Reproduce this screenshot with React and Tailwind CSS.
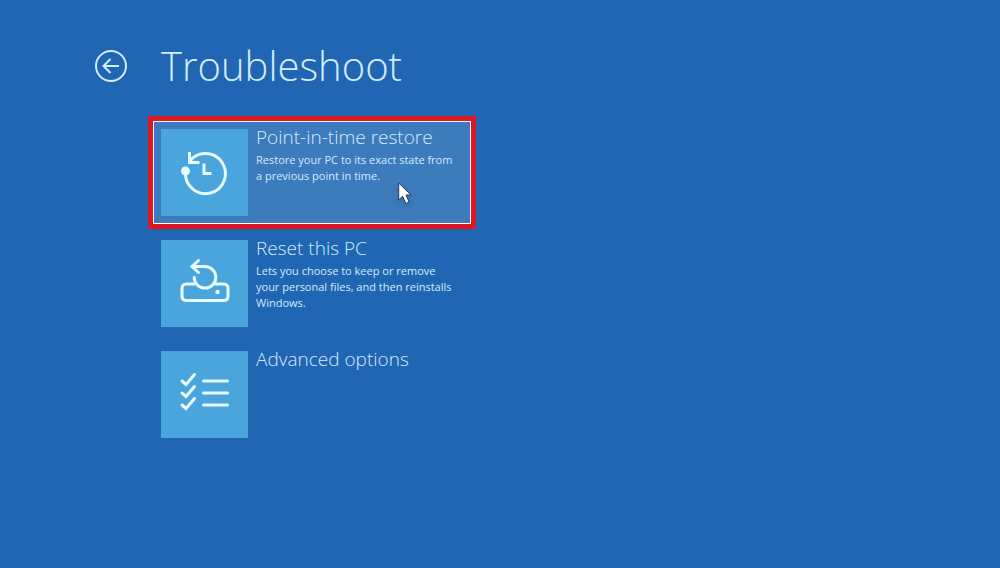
import React, { useState } from 'react';

function RestoreIcon() {
  return (
    <svg viewBox="0 0 87 87" className="h-full w-full" fill="none" stroke="currentColor" strokeWidth="3" aria-hidden="true">
      <path d="M28.500 32.500A20 20 0 1 1 24.500 43" />
      <path d="M28.500 23V33.500H38.500" />
      <path d="M43 34.500V44.500H50.500" />
      <circle cx="24.500" cy="42" r="4.500" fill="currentColor" stroke="none" />
    </svg>
  );
}

function ResetIcon() {
  return (
    <svg viewBox="0 0 87 87" className="h-full w-full" fill="none" stroke="currentColor" strokeWidth="3" strokeLinecap="round" aria-hidden="true">
      <path d="M33.500 44H25.500Q21 44 21 48.500V56Q21 60.500 25.500 60.500H62.500Q67 60.500 67 56V48.500Q67 44 62.500 44H54.500" />
      <path d="M31 26.500H44A10.800 10.800 0 1 1 33.200 37.500" />
      <path d="M37.500 20.500L31 26.500L37.500 32.500" />
      <circle cx="56.500" cy="52" r="2.200" fill="currentColor" stroke="none" />
    </svg>
  );
}

function OptionsIcon() {
  return (
    <svg viewBox="0 0 87 87" className="h-full w-full" fill="none" stroke="currentColor" strokeWidth="3" strokeLinecap="round" aria-hidden="true">
      <path d="M21 30L25 33.500L33.500 23.500M21 42L25 45.500L33.500 35.500M21 54L25 57.500L33.500 47.500" />
      <path d="M42.500 30H66.500M42.500 42H66.500M42.500 54H66.500" />
    </svg>
  );
}

const options = [
  {
    id: 'restore',
    title: 'Point-in-time restore',
    text: 'Restore your PC to its exact state from a previous point in time.',
    Icon: RestoreIcon,
  },
  {
    id: 'reset',
    title: 'Reset this PC',
    text: 'Lets you choose to keep or remove your personal files, and then reinstalls Windows.',
    Icon: ResetIcon,
  },
  { id: 'advanced', title: 'Advanced options', Icon: OptionsIcon },
];

function Pointer() {
  return (
    <svg viewBox="0 0 16 24" className="pointer-events-none absolute top-[60px] left-[244px] h-6 w-4 drop-shadow-md" aria-hidden="true">
      <path d="M0.700 1V18L4.600 14.200L7.900 21.500L11.200 20L8 13H13Z" fill="#fff" stroke="#26374f" strokeWidth="1" />
    </svg>
  );
}

export default function App() {
  const [selected, setSelected] = useState('restore');

  return (
    <main className="min-h-screen bg-[#2166b2] px-[95px] pt-9 pb-12 font-['Open_Sans',sans-serif] text-[#d3ecff]">
      <header className="flex items-center gap-[34px]">
        <button type="button" aria-label="Back" className="h-8 w-8 shrink-0">
          <svg viewBox="0 0 32 32" className="h-8 w-8" fill="none" stroke="currentColor" strokeWidth="2" aria-hidden="true">
            <circle cx="16" cy="16" r="15" />
            <path d="M24 16H9M15.500 9L8.500 16L15.500 23" />
          </svg>
        </button>
        <h1 className="text-[40px] leading-[60px] font-light">Troubleshoot</h1>
      </header>

      <div className="mt-[25px] ml-[58px] flex max-w-[318px] flex-col gap-2">
        {options.map(({ id, title, text, Icon }) => (
          <button
            key={id}
            type="button"
            onClick={() => setSelected(id)}
            className={`relative flex w-full items-start gap-2 border p-[7px] text-left ${
              selected === id ? 'border-white bg-[#3c7bbc] ring-5 ring-[#dc1720]' : 'border-transparent'
            }`}
          >
            <span className="h-[87px] w-[87px] shrink-0 bg-[#4aa5dd] text-[#e6fbff]">
              <Icon />
            </span>
            <span className="block min-w-0 flex-1 pr-2">
              <span className="block text-[19px] leading-4 font-light">{title}</span>
              {text && <span className="mt-[7px] block text-[11px] leading-4">{text}</span>}
            </span>
            {selected === id && <Pointer />}
          </button>
        ))}
      </div>
    </main>
  );
}
